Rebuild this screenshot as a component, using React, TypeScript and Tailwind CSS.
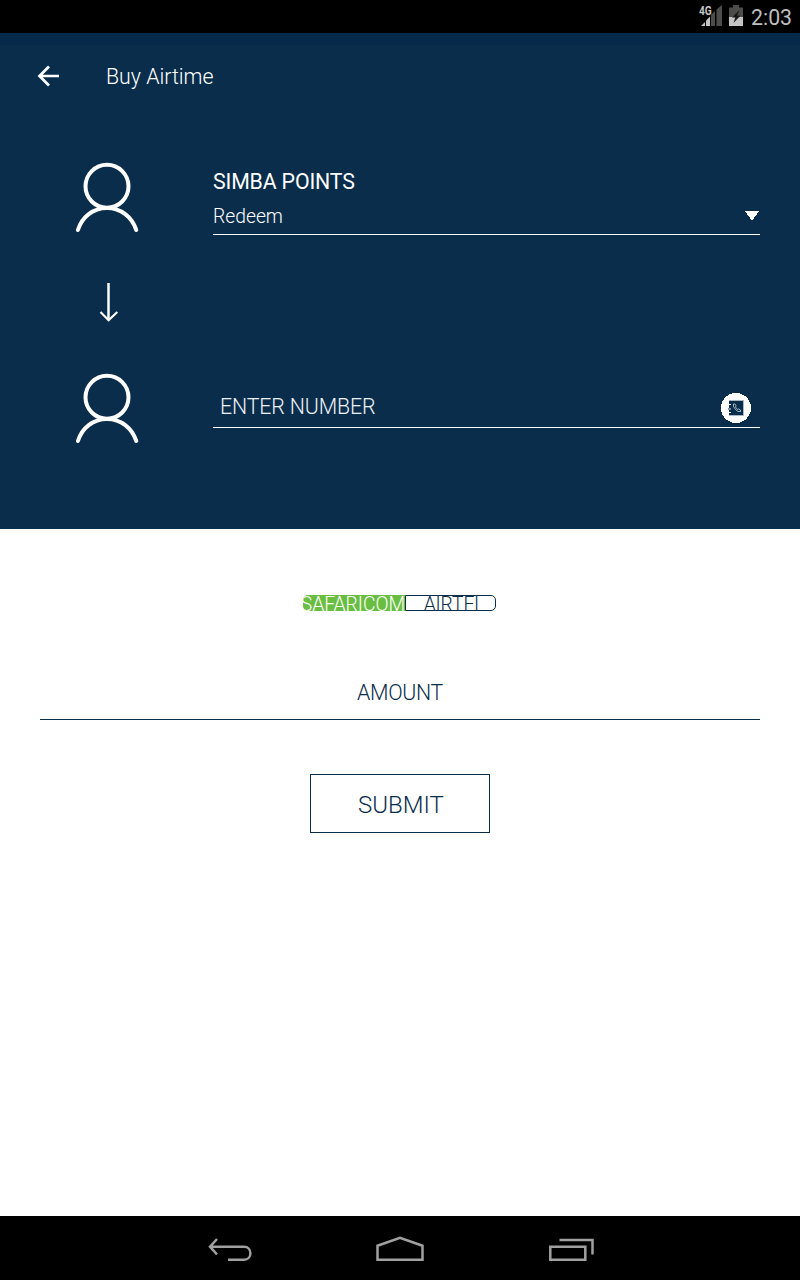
import React from "react";

function StatusBar() {
  return (
    <div className="flex h-[33px] items-start justify-end bg-black pr-2">
      <svg width="24" height="33" viewBox="0 0 24 33" className="mr-1.5">
        <text x="0" y="15" fontFamily="Roboto" fontWeight="700" fontSize="12.5" textLength="12.8" lengthAdjust="spacingAndGlyphs" fill="#c4c4c4">4G</text>
        <path d="M2 26L6 22V26Z" fill="#c4c4c4" />
        <path d="M7 26V20.5L11 16.5V26Z" fill="#c4c4c4" />
        <path d="M12 26V15L16 11V26ZM17.5 26V9.5L23 5V26Z" fill="#4c4c4a" />
      </svg>
      <svg width="14" height="33" viewBox="0 0 14 33" className="mr-2">
        <path d="M0 7.5H4V5H10V7.5H14V17H0Z" fill="#4c4c4a" />
        <path d="M0 17H14V26H0Z" fill="#c4c4c4" />
        <path d="M10.5 10L3 17.5H6.3L4.5 23L11.5 15.5H8.2Z" fill="#171717" />
      </svg>
      <span className="w-[41px] whitespace-nowrap text-[21.3px] leading-[36px] font-normal text-[#bebebe]">2:03</span>
    </div>
  );
}

function Person() {
  return (
    <svg width="64" height="72" viewBox="75 162 64 72" fill="none" stroke="white">
      <circle cx="107" cy="186.3" r="21.5" strokeWidth="4" />
      <path d="M77.9 230C82 217 93 208 107 208S132 217 136.3 230" strokeWidth="4" strokeLinecap="round" />
    </svg>
  );
}

function ContactsIcon() {
  return (
    <svg width="30" height="30" viewBox="0 0 30 30" shapeRendering="crispEdges">
      <circle cx="15" cy="15" r="15" fill="white" />
      <rect x="8" y="7" width="15" height="16" fill="#acb9c5" />
      <rect x="8" y="8" width="14" height="14" fill="#092d4b" />
      <path d="M7 11.5H10M7 19.5H10" stroke="white" />
      <path d="M7 15.5H10" stroke="#7c8fa1" strokeWidth="2" />
      <path d="M12.5 11V13.5L14.5 16.5L17 18.5H19.5V17L17.5 16L16.5 16.5L14.5 14L15 12.5L14 11Z" fill="none" stroke="#ccd5dc" strokeWidth="0.8" shapeRendering="geometricPrecision" />
    </svg>
  );
}

function NavBar() {
  return (
    <div className="flex h-16 items-center bg-black pl-[205px]">
      <svg width="50" height="64" viewBox="205 1216 50 64" fill="none" stroke="#a0a0a0" strokeWidth="2.5">
        <path d="M217 1239L210 1246.7L217 1254.5M210 1246.7H244C252.5 1246.7 252.5 1259.7 244 1259.7H228" />
      </svg>
      <svg width="54" height="64" viewBox="373 1216 54 64" className="ml-[118px]" fill="none" stroke="#a0a0a0" strokeWidth="2.5">
        <path d="M377.5 1259.7V1245.7L400 1237.9L422.5 1245.7V1259.7Z" />
      </svg>
      <svg width="50" height="64" viewBox="547 1216 50 64" className="ml-[120px]" fill="none" stroke="#a0a0a0" strokeWidth="2.5">
        <path d="M550.3 1246.7H585.3V1259.7H550.3ZM559.5 1240H592.5V1254.5" />
      </svg>
    </div>
  );
}

export default function App() {
  return (
    <div className="flex h-[1280px] w-[800px] flex-col overflow-hidden bg-white font-['Roboto',sans-serif] font-light text-[#092d4b]">
      <StatusBar />
      <header className="h-[496px] bg-[#092d4b] bg-linear-to-b from-[#07294a] from-[12px] to-[#092d4b] to-[12px] text-white">
        <div className="flex h-[87px] items-center pl-[37px]">
          <svg width="24" height="24" viewBox="37 64.5 24 24" fill="none" stroke="white" strokeWidth="2.7">
            <path d="M49 66L39.5 75.5L49 85M39.5 75.5H59" />
          </svg>
          <h1 className="ml-[45px] pt-px text-[21.33px] leading-6 font-light">Buy Airtime</h1>
        </div>
        <div className="flex h-[120px] pt-[42px] pl-[75px]">
          <Person />
          <div className="ml-[74px] flex h-[73px] w-[547px] flex-col border-b border-white">
            <span className="pt-2 text-[21.33px] leading-6 font-normal tracking-[-0.16px]">SIMBA POINTS</span>
            <div className="flex items-center justify-between pt-[11px] pr-px">
              <span className="text-[19.3px] leading-6">Redeem</span>
              <svg width="14" height="10" viewBox="0 0 14 10" className="-mt-[3px]" shapeRendering="crispEdges">
                <path d="M0 0H14L7 10Z" fill="white" />
              </svg>
            </div>
          </div>
        </div>
        <div className="flex h-[124px] items-center pl-[98px]">
          <svg width="22" height="42" viewBox="98 281 22 42" fill="none" stroke="white">
            <path d="M108.5 283V320" strokeWidth="2.5" />
            <path d="M100.5 312L108.6 320.3L117.3 312" strokeWidth="2.2" />
          </svg>
        </div>
        <div className="flex h-[90px] pt-[9px] pl-[75px]">
          <Person />
          <div className="ml-[74px] flex h-[55px] w-[547px] justify-between border-b border-white pr-[9px] pl-[7px]">
            <span className="pt-[22px] text-[21.33px] leading-6 tracking-[-0.13px] text-[#edf1f5]">ENTER NUMBER</span>
            <div className="pt-5"><ContactsIcon /></div>
          </div>
        </div>
      </header>
      <main className="flex flex-1 flex-col items-center">
        <div className="mt-[66px] mr-px flex h-4 w-[193px] text-[19.3px] leading-5">
          <div className="flex w-[102px] justify-center overflow-hidden rounded-l-[5px] bg-[#69be42] whitespace-nowrap text-white">
            <span className="-mr-2 -ml-[10px]">SAFARICOM</span>
          </div>
          <div className="flex w-[91px] justify-center overflow-hidden rounded-r-[5px] border border-[#092d4b] pl-[7px] leading-[18px]">
            <span className="tracking-[-0.1px]">AIRTEL</span>
          </div>
        </div>
        <div className="mt-[49px] flex h-[60px] w-[720px] justify-center border-b border-[#092d4b] pt-[21px]">
          <span className="text-[21.33px] leading-6 tracking-[-0.3px]">AMOUNT</span>
        </div>
        <button className="mt-[54px] flex h-[59px] w-[180px] items-center justify-center border border-[#092d4b] pt-0.5 pl-0.5 text-2xl font-light">SUBMIT</button>
      </main>
      <NavBar />
    </div>
  );
}
